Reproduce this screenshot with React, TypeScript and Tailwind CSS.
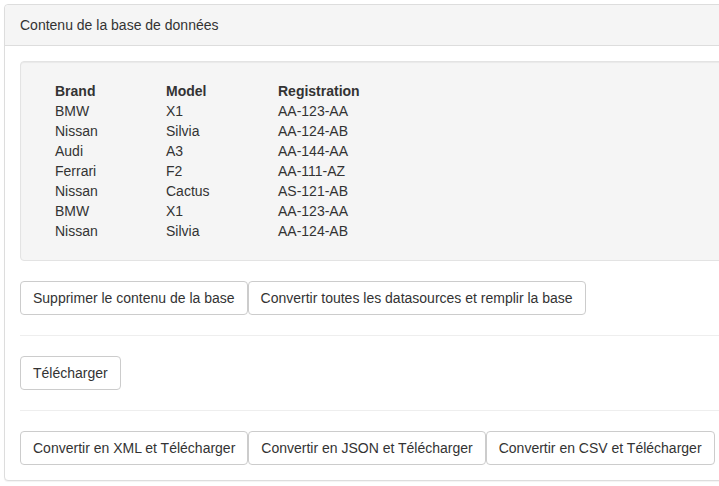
import React from 'react';

const cars = [
  { brand: 'BMW', model: 'X1', reg: 'AA-123-AA' },
  { brand: 'Nissan', model: 'Silvia', reg: 'AA-124-AB' },
  { brand: 'Audi', model: 'A3', reg: 'AA-144-AA' },
  { brand: 'Ferrari', model: 'F2', reg: 'AA-111-AZ' },
  { brand: 'Nissan', model: 'Cactus', reg: 'AS-121-AB' },
  { brand: 'BMW', model: 'X1', reg: 'AA-123-AA' },
  { brand: 'Nissan', model: 'Silvia', reg: 'AA-124-AB' },
];

const Btn = ({ children }: { children: React.ReactNode }) => (
  <button className="h-[34px] px-3 bg-white border border-[#ccc] rounded text-[14px] leading-5 text-[#333]">
    {children}
  </button>
);

const Divider = () => <div className="my-5 border-t border-[#eee]" />;

const App = () => {
  return (
    <div className="w-[719px] h-[486px] overflow-hidden bg-white p-1 text-[14px] leading-5 text-[#333] font-['Liberation_Sans',Arial,sans-serif]">
      <div className="w-[740px] border border-[#ddd] rounded bg-white shadow-[0_1px_1px_rgba(0,0,0,0.05)]">
        <div className="px-[15px] py-[10px] bg-[#f5f5f5] border-b border-[#ddd] rounded-t">
          Contenu de la base de données
        </div>
        <div className="p-[15px]">
          <div className="p-[19px] bg-[#f5f5f5] border border-[#e3e3e3] rounded shadow-[inset_0_1px_1px_rgba(0,0,0,0.05)]">
            <div className="grid grid-cols-[111px_112px_auto] pl-[15px]">
              <div className="font-bold">Brand</div>
              <div className="font-bold">Model</div>
              <div className="font-bold">Registration</div>
              {cars.map((c, i) => (
                <React.Fragment key={i}>
                  <div>{c.brand}</div>
                  <div>{c.model}</div>
                  <div>{c.reg}</div>
                </React.Fragment>
              ))}
            </div>
          </div>
          <div className="mt-5 flex">
            <Btn>Supprimer le contenu de la base</Btn>
            <Btn>Convertir toutes les datasources et remplir la base</Btn>
          </div>
          <Divider />
          <div className="flex">
            <Btn>Télécharger</Btn>
          </div>
          <Divider />
          <div className="flex">
            <Btn>Convertir en XML et Télécharger</Btn>
            <Btn>Convertir en JSON et Télécharger</Btn>
            <Btn>Convertir en CSV et Télécharger</Btn>
          </div>
        </div>
      </div>
    </div>
  );
};

export default App;
